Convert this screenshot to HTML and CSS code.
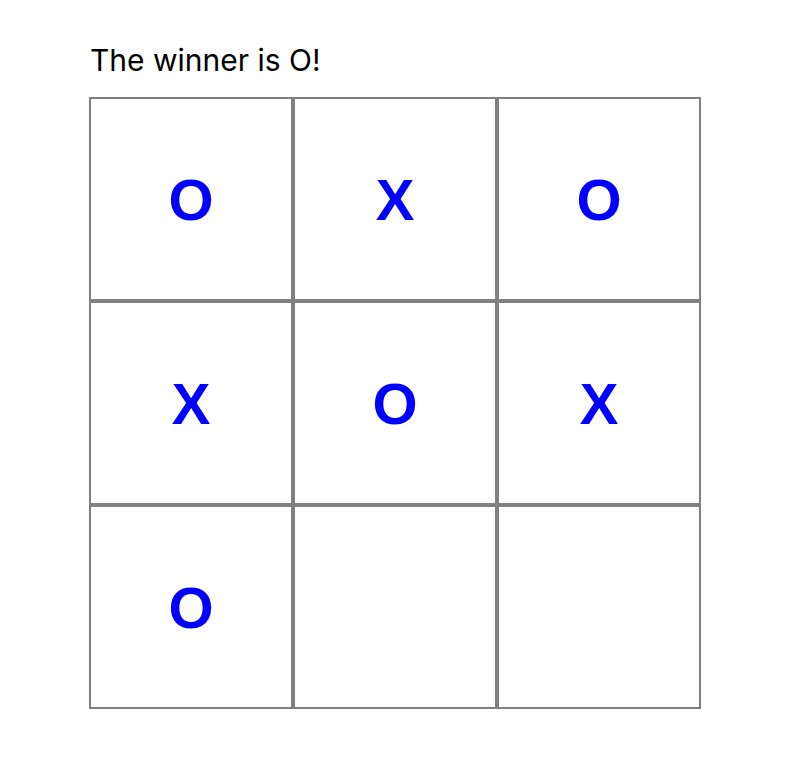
FILE: index.html
```html
<!DOCTYPE html>
<html lang="en">
<head>
    <meta charset="UTF-8">
    <meta name="viewport" content="width=device-width, initial-scale=1.0">
    <title>Tic Tac Toe</title>
    <link rel="stylesheet" href="styles.css">
</head>
<body>
    <div class="game">
        <div class="status">The winner is O!</div>
        <div class="board">
            <div class="square">O</div>
            <div class="square">X</div>
            <div class="square">O</div>
            <div class="square">X</div>
            <div class="square">O</div>
            <div class="square">X</div>
            <div class="square">O</div>
            <div class="square"></div>
            <div class="square"></div>
        </div>
    </div>
</body>
</html>
```

FILE: styles.css
```css
body {
    margin: 0;
    font-family: "Liberation Sans", Arial, sans-serif;
    background: #fff;
    color: #000;
}
.game {
    padding: 40px 0 0 89px;
}
.status {
    font-family: Inter, "Liberation Sans", sans-serif;
    font-size: 30px;
    line-height: 40px;
    margin-bottom: 17px;
    padding-left: 1px;
}
.board {
    display: grid;
    grid-template-columns: repeat(3, 204px);
    grid-template-rows: repeat(3, 204px);
}
.square {
    border: 2px solid #808080;
    display: flex;
    justify-content: center;
    align-items: center;
    font-size: 58px;
    font-weight: bold;
    color: #0000ff;
}
```
